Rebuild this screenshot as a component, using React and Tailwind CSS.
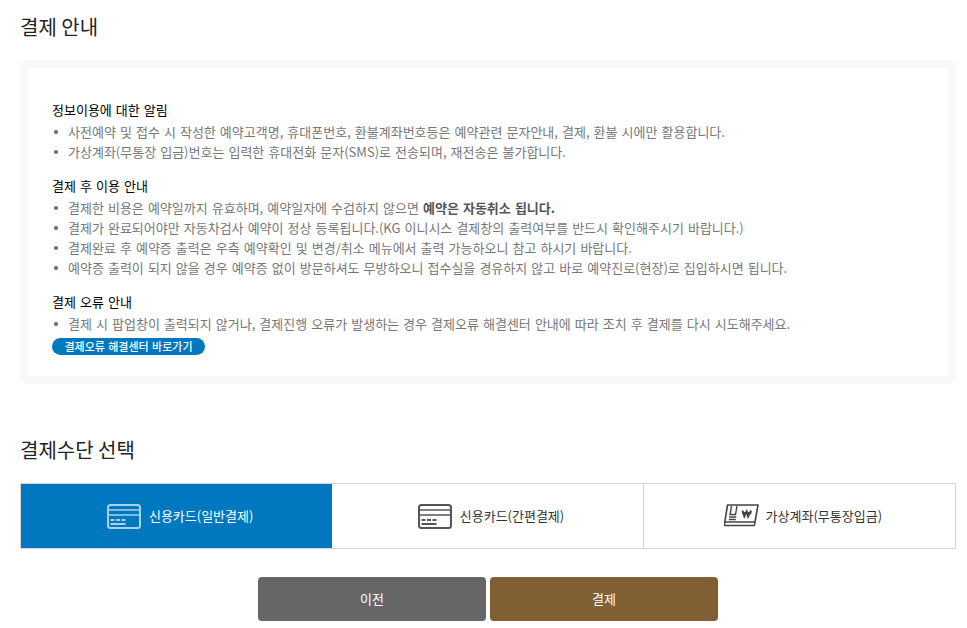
import React from 'react';

const CardIcon = ({ color }) => (
  <svg width="34" height="25" viewBox="0 0 34 25" fill="none" stroke={color} className="shrink-0">
    <rect x="1" y="1" width="32" height="23" rx="2.5" strokeWidth="2" />
    <path d="M1 6h32M1 11h32" strokeWidth="1.5" />
    <path d="M3.5 16h4M9 16h4M14.5 16h4M3.5 20h15" strokeWidth="2" />
  </svg>
);

const BankIcon = () => (
  <svg width="35" height="24" viewBox="0 0 35 24" fill="none" stroke="#444" className="shrink-0">
    <path d="M3.5 1h30.5l-3 17H.8z" strokeWidth="1.6" strokeLinejoin="round" />
    <path d="M.8 18l-.3 3.5h30l.6-3.5" strokeWidth="1.4" strokeLinejoin="round" />
    <path d="M7.5 2l-1.4 8.5h5.4L13 2M5.2 13h7M4.8 15.5h7" strokeWidth="1.4" />
    <path d="M18.5 6.5l1.8 6 2.4-5 1.4 5 3-6M18 9h9.5" strokeWidth="1.9" />
  </svg>
);

const sections = [
  {
    title: '정보이용에 대한 알림',
    items: [
      '사전예약 및 접수 시 작성한 예약고객명, 휴대폰번호, 환불계좌번호등은 예약관련 문자안내, 결제, 환불 시에만 활용합니다.',
      '가상계좌(무통장 입금)번호는 입력한 휴대전화 문자(SMS)로 전송되며, 재전송은 불가합니다.',
    ],
  },
  {
    title: '결제 후 이용 안내',
    items: [
      <>결제한 비용은 예약일까지 유효하며, 예약일자에 수검하지 않으면 <b className="font-bold text-[#555]">예약은 자동취소 됩니다.</b></>,
      '결제가 완료되어야만 자동차검사 예약이 정상 등록됩니다.(KG 이니시스 결제창의 출력여부를 반드시 확인해주시기 바랍니다.)',
      '결제완료 후 예약증 출력은 우측 예약확인 및 변경/취소 메뉴에서 출력 가능하오니 참고 하시기 바랍니다.',
      '예약증 출력이 되지 않을 경우 예약증 없이 방문하셔도 무방하오니 접수실을 경유하지 않고 바로 예약진로(현장)로 집입하시면 됩니다.',
    ],
  },
  {
    title: '결제 오류 안내',
    items: ['결제 시 팝업창이 출력되지 않거나, 결제진행 오류가 발생하는 경우 결제오류 해결센터 안내에 따라 조치 후 결제를 다시 시도해주세요.'],
  },
];

const Section = ({ title, items }) => (
  <div className="mb-[14px] last:mb-0">
    <h3 className="text-[13px] leading-[20px] font-normal text-black mb-[2px] [word-spacing:1.15px]">{title}</h3>
    <ul>
      {items.map((item, i) => (
        <li key={i} className="flex h-[20px] items-center text-[13px] leading-[20px] text-[#777] [word-spacing:1.15px]">
          <span className="w-[4px] h-[4px] rounded-full bg-[#666] ml-[2px] mr-[10px] shrink-0" />
          <span className="whitespace-nowrap">{item}</span>
        </li>
      ))}
    </ul>
  </div>
);

export default function App() {
  return (
    <div className="w-[967px] h-[628px] overflow-hidden bg-white px-[20px] pt-[12px] font-['Noto_Sans_CJK_KR','Noto_Sans',sans-serif]">
      <h2 className="text-[20px] leading-[30px] font-normal text-[#222]">결제 안내</h2>

      <div className="mt-[18px] w-[936px] h-[324px] border-[8px] border-[#f8f8f8] rounded-[8px] pl-[24px] pt-[32px]">
        <div>
          {sections.map((s) => (
            <Section key={s.title} title={s.title} items={s.items} />
          ))}
        </div>
        <div className="mt-[4px] w-[153px] h-[17px] rounded-full bg-[#0078bf] text-white text-[11px] leading-[17px] font-medium text-center [word-spacing:0.9px]">
          결제오류 해결센터 바로가기
        </div>
      </div>

      <h2 className="mt-[51px] text-[20px] leading-[30px] font-normal text-[#222]">결제수단 선택</h2>

      <div className="mt-[18px] w-[936px] h-[66px] grid grid-cols-3 border border-[#d5d5d5]">
        <div className="flex items-center justify-center gap-[8px] pl-[7px] bg-[#0078bf] text-white text-[13px]">
          <CardIcon color="#a9d3ec" />
          <span>신용카드(일반결제)</span>
        </div>
        <div className="flex items-center justify-center gap-[8px] pl-[7px] border-r border-[#d5d5d5] text-[#333] text-[13px]">
          <CardIcon color="#555" />
          <span>신용카드(간편결제)</span>
        </div>
        <div className="flex items-center justify-center gap-[7px] pl-[7px] text-[#333] text-[13px]">
          <BankIcon />
          <span>가상계좌(무통장입금)</span>
        </div>
      </div>

      <div className="mt-[28px] w-[936px] flex justify-center gap-[4px]">
        <button className="w-[228px] h-[44px] rounded-[4px] bg-[#666666] text-white text-[13px]">이전</button>
        <button className="w-[228px] h-[44px] rounded-[4px] bg-[#7f5f33] text-white text-[13px]">결제</button>
      </div>
    </div>
  );
}
